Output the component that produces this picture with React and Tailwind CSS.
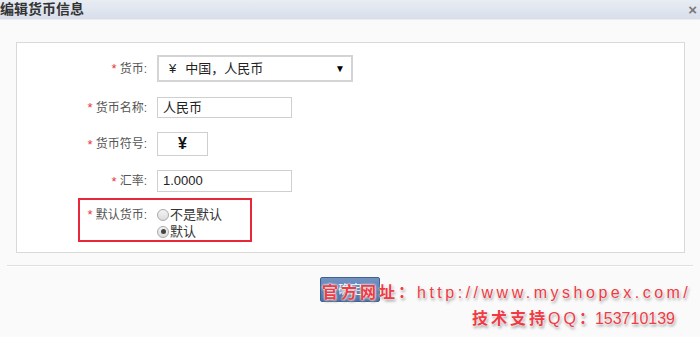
import React from "react";

const FONT = "[font-family:'Liberation_Sans','Noto_Sans_CJK_SC',sans-serif]";

function Label({ children }) {
  return (
    <div className="flex w-[140px] shrink-0 items-center justify-end pr-[10px] text-[12px] text-[#555]">
      <span className="mr-[3px] text-[13px] leading-none text-[#e4393c]">*</span>
      <span>{children}:</span>
    </div>
  );
}

function Radio({ checked, label }) {
  return (
    <label className="flex h-[17px] items-center text-[13px] text-[#333]">
      <span className="mr-[1px] flex h-[12px] w-[12px] items-center justify-center rounded-full border border-[#a9a9a9] bg-gradient-to-b from-[#f4f4f4] to-[#dcdcdc]">
        {checked && <span className="h-[5px] w-[5px] rounded-full bg-[#444]" />}
      </span>
      {label}
    </label>
  );
}

export default function App() {
  return (
    <div className={`relative h-[337px] w-[700px] overflow-hidden bg-[#fafafa] ${FONT}`}>
      {/* Title bar */}
      <div className="flex h-[20px] items-center justify-between border-b border-[#e9edf3] bg-gradient-to-b from-[#e8ecf3] to-[#d8dfeb]">
        <span className="text-[14px] font-bold text-[#333]">编辑货币信息</span>
        <span className="mr-[3px] text-[15px] font-bold leading-none text-[#7a7a7a]">×</span>
      </div>

      {/* Form panel */}
      <div className="relative ml-[16px] mt-[22px] h-[211px] w-[669px] border border-[#d9d9d9] bg-white pt-[12px]">
        <div className="flex h-[27px] items-center">
          <Label>货币</Label>
          <div className="flex h-[27px] w-[196px] items-center justify-between border-2 border-[#d4d4d4] bg-white pl-[10px] pr-[6px] text-[13px] text-[#222]">
            <span>
              ¥<span className="ml-[9px]">中国，人民币</span>
            </span>
            <span className="text-[10px] text-black">▼</span>
          </div>
        </div>

        <div className="mt-[15px] flex h-[21px] items-center">
          <Label>货币名称</Label>
          <div className="flex h-[21px] w-[135px] items-center border border-[#cfcfcf] bg-white pl-[5px] text-[13px] text-[#222]">
            人民币
          </div>
        </div>

        <div className="mt-[14px] flex h-[24px] items-center">
          <Label>货币符号</Label>
          <div className="flex h-[24px] w-[51px] items-center justify-center border border-[#cfcfcf] bg-white text-[16px] font-bold text-[#111]">
            ¥
          </div>
        </div>

        <div className="mt-[14px] flex h-[22px] items-center">
          <Label>汇率</Label>
          <div className="flex h-[22px] w-[135px] items-center border border-[#cfcfcf] bg-white pl-[5px] text-[13px] text-[#222]">
            1.0000
          </div>
        </div>

        <div className="mt-[14px] flex items-start">
          <div className="flex h-[17px] items-center">
            <Label>默认货币</Label>
          </div>
          <div className="flex flex-col">
            <Radio label="不是默认" />
            <Radio checked label="默认" />
          </div>
        </div>

        {/* annotation box */}
        <div className="pointer-events-none absolute left-[61px] top-[155px] h-[44px] w-[174px] border-2 border-[#e8283a]" />
      </div>

      {/* Footer */}
      <div className="mx-[7px] mt-[12px] border-t border-[#e0e0e0] shadow-[0_1px_0_#fff]" />
      <div className="flex justify-center pt-[11px]">
        <button className="h-[25px] w-[60px] rounded-[2px] border border-[#3f5f8f] bg-gradient-to-b from-[#7393c2] to-[#4d70a6] text-[12px] text-white">
          确定
        </button>
      </div>

      {/* Watermark */}
      <div className="pointer-events-none absolute left-[322px] top-[280px] text-[16px] leading-[26px] text-[#f03a44] [text-shadow:0_0_2px_#fff,0_0_3px_#fff,1px_2px_3px_#888]">
        <div className="whitespace-nowrap">
          <span className="font-bold tracking-[3px]">官方网址：</span>
          <span className="tracking-[3.5px]">http://www.myshopex.com/</span>
        </div>
        <div className="ml-[150px] whitespace-nowrap">
          <span className="font-bold tracking-[3px]">技术支持</span>
          <span className="tracking-[3px]">QQ</span>
          <span className="font-bold">：</span>
          <span>153710139</span>
        </div>
      </div>
    </div>
  );
}
